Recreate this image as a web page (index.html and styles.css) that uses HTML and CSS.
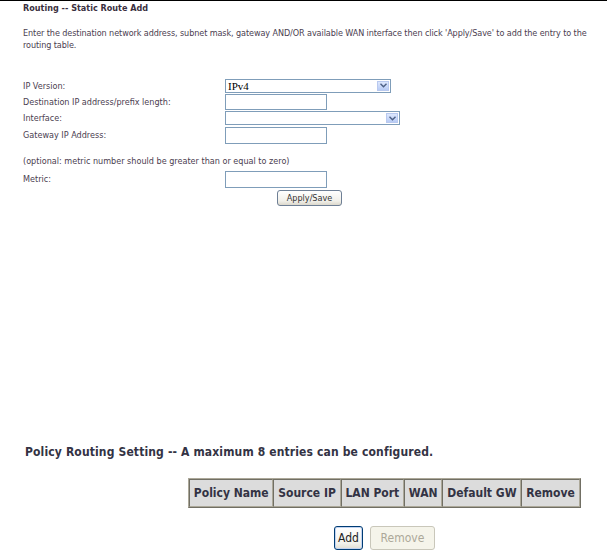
FILE: index.html
```html
<!DOCTYPE html>
<html>
<head>
<meta charset="utf-8">
<title>Static Route Add</title>
<link rel="stylesheet" href="styles.css">
</head>
<body>
<div class="topline"></div>
<div class="page">
  <div class="title">Routing -- Static Route Add</div>
  <p class="intro">Enter the destination network address, subnet mask, gateway AND/OR available WAN interface then click 'Apply/Save' to add the entry to the routing table.</p>

  <div class="form">
    <div class="row r1">
      <span class="label">IP Version:</span>
      <div class="select w166"><span class="val">IPv4</span><span class="arrow"><svg width="7" height="5" viewBox="0 0 7 5"><path d="M0.5 0.8 L3.5 3.8 L6.5 0.8" fill="none" stroke="#4d6185" stroke-width="1.4"/></svg></span></div>
    </div>
    <div class="row r2">
      <span class="label">Destination IP address/prefix length:</span>
      <div class="input h16"></div>
    </div>
    <div class="row r3">
      <span class="label">Interface:</span>
      <div class="select w175"><span class="val"></span><span class="arrow"><svg width="7" height="5" viewBox="0 0 7 5"><path d="M0.5 0.8 L3.5 3.8 L6.5 0.8" fill="none" stroke="#4d6185" stroke-width="1.4"/></svg></span></div>
    </div>
    <div class="row r4">
      <span class="label">Gateway IP Address:</span>
      <div class="input h17"></div>
    </div>
    <div class="note">(optional: metric number should be greater than or equal to zero)</div>
    <div class="row r5">
      <span class="label">Metric:</span>
      <div class="input h17"></div>
    </div>
    <div class="btnrow">
      <button class="btn apply">Apply/Save</button>
    </div>
  </div>

  <div class="policy">
    <div class="ptitle">Policy Routing Setting -- A maximum 8 entries can be configured.</div>
    <table class="ptable">
      <tr>
        <th>Policy Name</th>
        <th>Source IP</th>
        <th>LAN Port</th>
        <th>WAN</th>
        <th>Default GW</th>
        <th>Remove</th>
      </tr>
    </table>
    <div class="pbtns">
      <button class="btn2 add">Add</button>
      <button class="btn2 remove" disabled>Remove</button>
    </div>
  </div>
</div>
</body>
</html>
```
FILE: styles.css
```css
html, body {
  margin: 0;
  padding: 0;
  background: #ffffff;
}
body {
  font-family: "DejaVu Sans Condensed", "DejaVu Sans", sans-serif;
  font-size: 9px;
  color: #4b4050;
  width: 607px;
  height: 550px;
  overflow: hidden;
}
.topline {
  height: 1px;
  background: #000;
}
.page {
  padding-left: 23px;
}
.title {
  margin-top: 1px;
  line-height: 12px;
  font-weight: bold;
  font-size: 9px;
  color: #3a3040;
}
.intro {
  margin: 13px 0 0;
  line-height: 12px;
  width: 584px;
  letter-spacing: -0.09px;
}
.form {
  margin-top: 27px;
}
.row {
  display: flex;
  align-items: center;
}
.label {
  width: 202px;
  flex: none;
}
.r1 { height: 15px; }
.r2 { height: 17px; }
.r3 { height: 16px; }
.r4 { height: 18px; }
.r5 { height: 18px; margin-top: 3px; }
.note {
  margin-top: 11px;
  line-height: 12px;
}
.select {
  box-sizing: border-box;
  height: 14px;
  border: 1px solid #7f9db9;
  display: flex;
  align-items: center;
  justify-content: space-between;
  background: #fff;
}
.w166 { width: 166px; }
.w175 { width: 175px; }
.val {
  font-family: "Liberation Serif", serif;
  font-size: 11px;
  color: #000;
  padding-left: 2px;
  line-height: 12px;
}
.arrow {
  width: 12px;
  height: 10px;
  margin-right: 1px;
  box-sizing: border-box;
  border: 1px solid #b9c9ef;
  background: linear-gradient(#dde7fd, #b8cbf5);
  display: flex;
  align-items: center;
  justify-content: center;
}
.input {
  box-sizing: border-box;
  width: 102px;
  border: 1px solid #7f9db9;
  background: #fff;
}
.h16 { height: 16px; }
.h17 { height: 17px; }
.btnrow {
  margin-top: 2px;
  padding-left: 254px;
  height: 16px;
}
.btn {
  box-sizing: border-box;
  height: 16px;
  width: 65px;
  padding: 0;
  font-family: "DejaVu Sans Condensed", "DejaVu Sans", sans-serif;
  font-size: 9px;
  color: #333;
  border: 1px solid #6e7f95;
  border-radius: 3px;
  background: linear-gradient(#ffffff, #f1f0ea 70%, #dcd8cc);
  display: block;
}
.policy {
  margin-top: 238px;
  padding-left: 2px;
}
.ptitle {
  font-weight: bold;
  font-size: 12px;
  line-height: 16px;
  letter-spacing: 0.14px;
  color: #333344;
}
.ptable {
  margin: 18px 0 0 163px;
  border-collapse: separate;
  border-spacing: 0;
  border: 1px solid #aca899;
  border-right-color: #716f64;
  border-bottom-color: #716f64;
  background: #dcdcdc;
}
.ptable th {
  height: 28px;
  box-sizing: border-box;
  padding: 0 3.8px;
  font-size: 12px;
  font-weight: bold;
  color: #333344;
  border: 1px solid #aca899;
  border-top-color: #716f64;
  border-left-color: #716f64;
  white-space: nowrap;
}
.pbtns {
  margin: 18px 0 0 309px;
  display: flex;
  gap: 7px;
}
.btn2 {
  box-sizing: border-box;
  height: 24px;
  padding: 0;
  font-family: "DejaVu Sans Condensed", "DejaVu Sans", sans-serif;
  font-size: 12px;
  border-radius: 3px;
  background: linear-gradient(#ffffff, #f2f1eb 75%, #e0ddd2);
}
.add {
  width: 29px;
  color: #222;
  border: 1px solid #003c74;
  box-shadow: inset 0 0 0 1px #c2d3f0;
}
.remove {
  width: 65px;
  color: #aca899;
  border: 1px solid #c9c7ba;
  background: #f5f4ea;
}
```
